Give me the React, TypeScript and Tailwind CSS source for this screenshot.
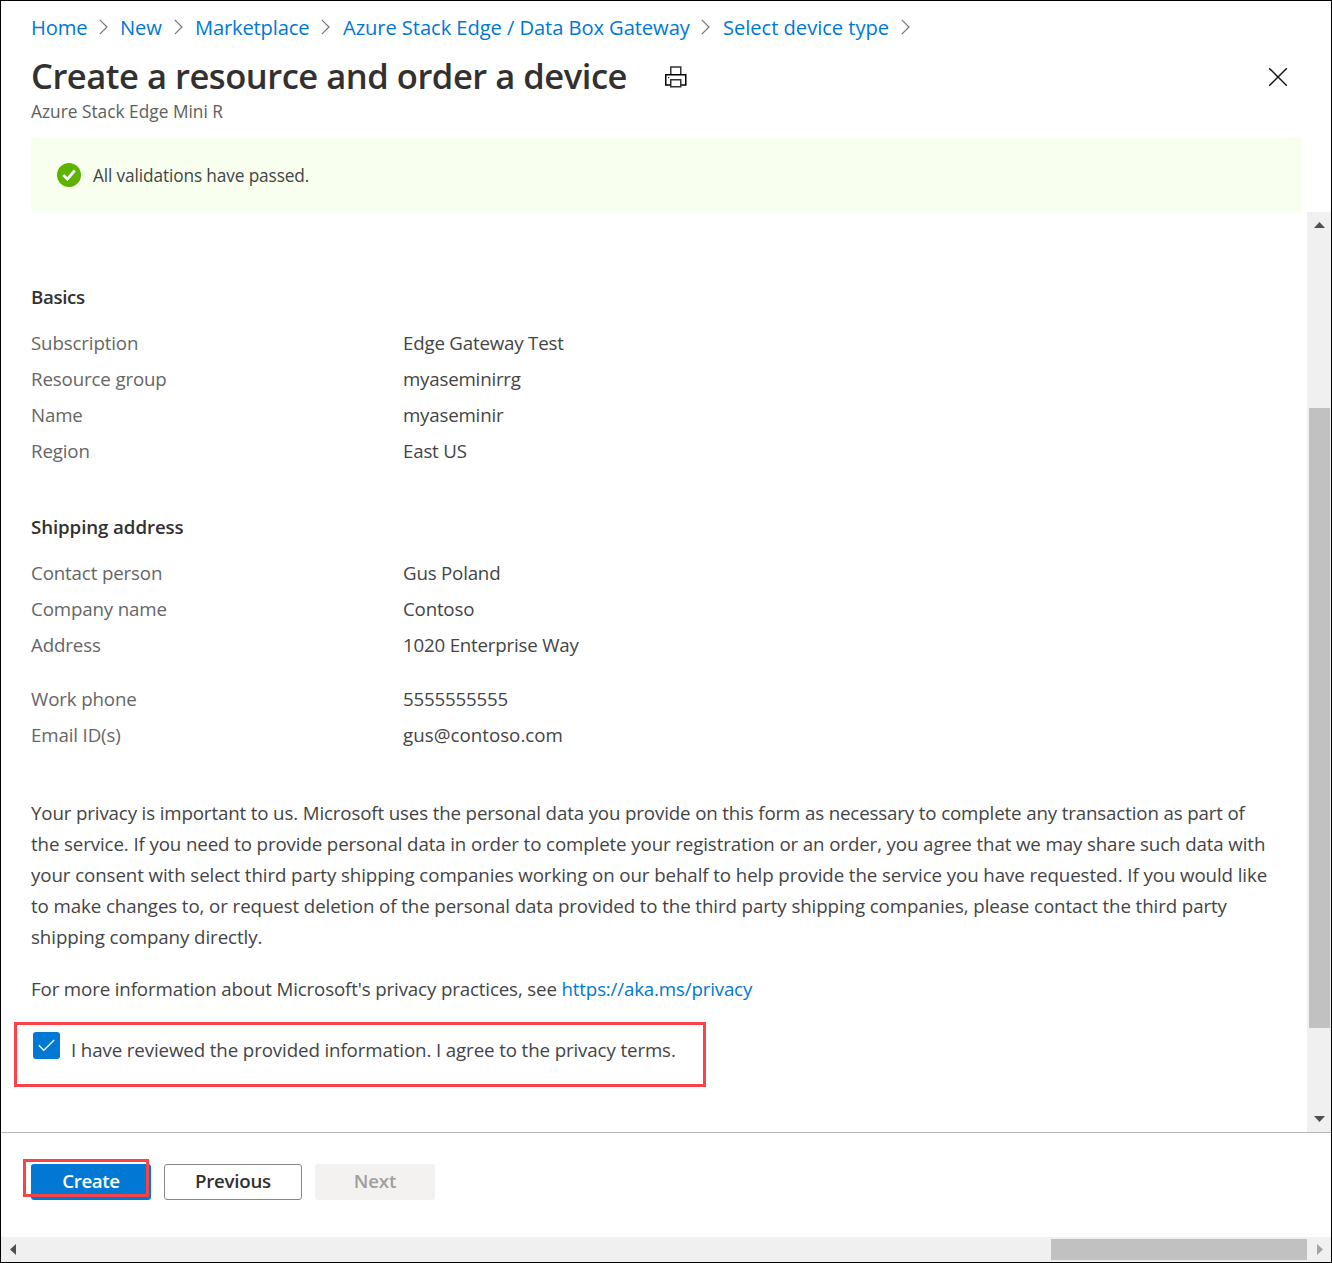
type Crumb = { label: string; cell: string };

const crumbs: Crumb[] = [
  { label: 'Home', cell: 'w-[89px] pr-[12px] tracking-[-0.15px]' },
  { label: 'New', cell: 'w-[75px] pr-[12px] tracking-[-0.1px]' },
  { label: 'Marketplace', cell: 'w-[148px] pr-[13px] tracking-[-0.18px]' },
  { label: 'Azure Stack Edge / Data Box Gateway', cell: 'w-[380px] pr-[13px] tracking-[-0.08px]' },
  { label: 'Select device type', cell: 'w-[187px] tracking-[-0.04px]' },
];

const basics: [string, string][] = [
  ['Subscription', 'Edge Gateway Test'],
  ['Resource group', 'myaseminirrg'],
  ['Name', 'myaseminir'],
  ['Region', 'East US'],
];

const shipping: [string, string][] = [
  ['Contact person', 'Gus Poland'],
  ['Company name', 'Contoso'],
  ['Address', '1020 Enterprise Way'],
];

const contact: [string, string][] = [
  ['Work phone', '5555555555'],
  ['Email ID(s)', 'gus@contoso.com'],
];

const privacyLines: [string, string][] = [
  [
    'Your privacy is important to us. Microsoft uses the personal data you provide on this form as necessary to complete any transaction as part of',
    'tracking-[-0.138px]',
  ],
  [
    'the service. If you need to provide personal data in order to complete your registration or an order, you agree that we may share such data with',
    'tracking-[-0.113px]',
  ],
  [
    'your consent with select third party shipping companies working on our behalf to help provide the service you have requested. If you would like',
    'tracking-[-0.088px]',
  ],
  [
    'to make changes to, or request deletion of the personal data provided to the third party shipping companies, please contact the third party',
    'tracking-[-0.095px]',
  ],
  ['shipping company directly.', 'tracking-[-0.07px]'],
];

function Chevron() {
  return (
    <svg width="9" height="16" viewBox="0 0 9 16" fill="none" stroke="#767676" strokeWidth="1.2" className="shrink-0">
      <path d="M0.8 0.8 8 8 0.8 15.2" />
    </svg>
  );
}

function Printer() {
  return (
    <svg width="22" height="22" viewBox="0 0 22 22" fill="none" className="mt-[2px] shrink-0">
      <path d="M5.75 8V1H15.75V8" stroke="#333" strokeWidth="1.5" />
      <path d="M5 19H0.75V8.75H20.75V19H16" stroke="#000" strokeWidth="1.5" />
      <path d="M5.75 13.75H15.75V20.75H5.75Z" stroke="#333" strokeWidth="1.5" />
      <path d="M3 11H4.3V12.3H3Z" fill="#333" />
    </svg>
  );
}

function Rows({ rows }: { rows: [string, string][] }) {
  return (
    <dl>
      {rows.map(([k, v]) => (
        <div key={k} className="flex h-9 items-center">
          <dt className="w-[372px] tracking-[-0.14px] text-[#666]">{k}</dt>
          <dd className={v.includes('@') ? 'tracking-[0.03px]' : 'tracking-[-0.2px]'}>{v}</dd>
        </div>
      ))}
    </dl>
  );
}

function Arrow({ d, w, h, color = '#505050' }: { d: string; w: number; h: number; color?: string }) {
  return (
    <svg width={w} height={h} viewBox={`0 0 ${w} ${h}`} className="shrink-0">
      <path d={d} fill={color} />
    </svg>
  );
}

export default function App() {
  return (
    <div className="flex h-[1263px] w-[1332px] flex-col overflow-hidden whitespace-nowrap border border-black bg-white font-['Open_Sans','Noto_Sans',sans-serif] text-[18.72px] tracking-[-0.11px] text-[#444]">
      <header className="h-[136px] pl-[30px]">
        <nav className="flex h-[52px] items-center text-[20.16px] text-[#0078d4]">
          {crumbs.map((c) => (
            <div key={c.label} className={`flex items-center justify-between ${c.cell}`}>
              <a>{c.label}</a>
              <Chevron />
            </div>
          ))}
        </nav>
        <div className="flex h-[46px] items-center pr-[43px]">
          <h1 className="w-[634px] text-[34.56px] leading-[46px] font-semibold tracking-[-0.48px] text-[#323130]">
            Create a resource and order a device
          </h1>
          <Printer />
          <svg width="20" height="20" viewBox="0 0 20 20" stroke="#111" strokeWidth="1.4" className="mt-[2px] ml-auto">
            <path d="M1.2 1.2 18.8 18.8M18.8 1.2 1.2 18.8" />
          </svg>
        </div>
        <p className="pt-px text-[17.28px] leading-6 tracking-[0.02px] text-[#605e5c]">Azure Stack Edge Mini R</p>
      </header>

      <div className="ml-[30px] flex h-[75px] w-[1271px] shrink-0 items-center gap-3 rounded-[3px] bg-[#f8ffef] pl-[26px]">
        <svg width="24" height="24" viewBox="0 0 24 24">
          <circle cx="12" cy="12" r="12" fill="#5db300" />
          <path d="M6.2 12.1 10.4 16.2 17.8 7.4" fill="none" stroke="#fff" strokeWidth="2.8" />
        </svg>
        <span className="pt-[2px] text-[17.28px] tracking-[-0.13px]">All validations have passed.</span>
      </div>

      <div className="flex h-[920px] shrink-0">
        <main className="w-[1306px] pt-[67px] pl-[13px]">
          <div className="pl-[17px]">
            <h2 className="h-9 leading-9 font-semibold tracking-[-0.35px] text-[#323130]">Basics</h2>
            <div className="mt-[10px]">
              <Rows rows={basics} />
            </div>
            <h2 className="mt-10 h-9 leading-9 font-semibold tracking-[-0.1px] text-[#323130]">Shipping address</h2>
            <div className="mt-[10px] flex flex-col gap-[18px]">
              <Rows rows={shipping} />
              <Rows rows={contact} />
            </div>
            <p className="mt-[44px] leading-[31px]">
              {privacyLines.map(([line, tracking]) => (
                <span key={line} className={`block ${tracking}`}>
                  {line}
                </span>
              ))}
            </p>
            <p className="mt-[21px] leading-[31px] tracking-[-0.135px]">
              For more information about Microsoft's privacy practices, see{' '}
              <a className="tracking-[-0.17px] text-[#0078d4]">https://aka.ms/privacy</a>
            </p>
          </div>
          <label className="mt-[18px] flex h-[65px] w-[692px] items-start border-[3px] border-[#f94346] pl-4">
            <span className="mt-[7px] flex size-[27px] items-center justify-center rounded-[3px] bg-[#0078d4]">
              <svg width="17" height="13" viewBox="0 0 17 13" fill="none" stroke="#fff" strokeWidth="1.3">
                <path d="M0.8 6.3 5.8 11.3 16.2 1" />
              </svg>
            </span>
            <span className="mt-[9px] ml-[11px] leading-8 tracking-[-0.115px]">
              I have reviewed the provided information. I agree to the privacy terms.
            </span>
          </label>
        </main>
        <div className="flex w-6 flex-col items-center bg-[#f0f0f0] py-[10px]">
          <Arrow w={11} h={6} d="M5.5 0 11 6H0Z" />
          <div className="mt-[180px] ml-px h-[620px] w-[21px] bg-[#c1c1c1]" />
          <div className="mt-auto flex">
            <Arrow w={11} h={6} d="M0 0H11L5.5 6Z" />
          </div>
        </div>
      </div>

      <footer className="flex h-[105px] shrink-0 items-start gap-[13px] border-t border-[#b8b8b8] pt-[31px] pl-[30px] font-semibold">
        <button className="relative h-9 w-[120px] rounded-[3px] bg-[#0078d4] pb-[2px] tracking-[-0.35px] text-white">
          Create
          <span className="absolute -top-[5px] -left-2 h-[38px] w-[126px] border-[3px] border-[#f94346]" />
        </button>
        <button className="h-9 w-[138px] rounded-[3px] border border-[#8a8886] pb-[2px] tracking-[-0.25px] text-[#323130]">
          Previous
        </button>
        <button className="h-9 w-[120px] rounded-[3px] bg-[#f3f2f1] pb-[2px] tracking-[-0.1px] text-[#a19f9d]">Next</button>
      </footer>

      <div className="flex h-[25px] shrink-0 items-center bg-[#f0f0f0] pr-2 pl-[9px]">
        <Arrow w={6} h={11} d="M6 0V11L0 5.5Z" />
        <div className="ml-auto h-[21px] w-64 bg-[#c1c1c1]" />
        <div className="ml-[10px]">
          <Arrow w={6} h={11} d="M0 0V11L6 5.5Z" color="#a3a3a3" />
        </div>
      </div>
    </div>
  );
}
